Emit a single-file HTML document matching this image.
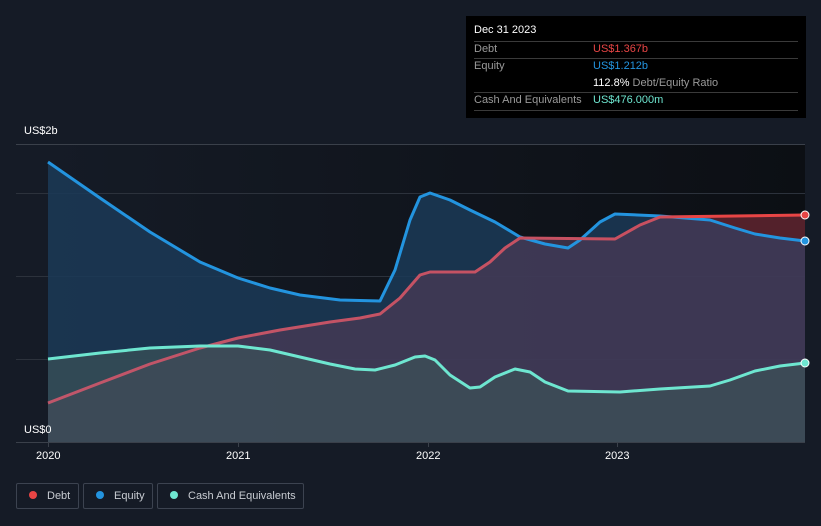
<!DOCTYPE html>
<html><head><style>
body{margin:0;width:821px;height:526px;background:#151b26;font-family:"Liberation Sans",sans-serif;overflow:hidden;position:relative}
.t{position:absolute;font-size:11px;color:#fff}
.tip{position:absolute;left:466px;top:16px;width:340px;height:102px;background:#000}
.tip div{position:absolute;font-size:11px}
.ln{position:absolute;left:8px;width:324px;height:1px;background:#3a3a3a}
.lg{position:absolute;top:483px;height:26px;border:1px solid #3c4350;border-radius:2px;box-sizing:border-box;font-size:11px;color:#c8ccd2;line-height:24px}
.lg i{display:inline-block;width:8px;height:8px;border-radius:50%;margin:0 10px 0 12px;vertical-align:-0px}
</style></head><body>
<svg width="821" height="526" style="position:absolute;left:0;top:0">
<defs><linearGradient id="bg" x1="0" x2="1"><stop offset="0" stop-color="#151b26"/><stop offset="1" stop-color="#0c0f14"/></linearGradient>
<linearGradient id="dl" x1="0" x2="1"><stop offset="0" stop-color="#c0566a"/><stop offset="0.8" stop-color="#c85060"/><stop offset="0.85" stop-color="#e84545"/></linearGradient></defs>
<rect x="48" y="144" width="757" height="298" fill="url(#bg)"/>
<g stroke="#2c323c" stroke-width="1"><line x1="16" y1="144.5" x2="805" y2="144.5" stroke="#3a404a"/><line x1="16" y1="193.5" x2="805" y2="193.5"/><line x1="16" y1="276.5" x2="805" y2="276.5"/><line x1="16" y1="359.5" x2="805" y2="359.5"/><line x1="16" y1="442.5" x2="805" y2="442.5" stroke="#3a404a"/></g>
<path d="M48,162 L100,198 L150,232 L200,262 L238,278 L270,288 L300,295 L340,300 L380,301 L395,270 L410,220 L420,197 L430,193 L450,200 L470,210 L495,222 L520,237 L545,244 L568,248 L580,240 L600,222 L615,214 L660,216 L710,220 L735,228 L755,234 L780,238 L805,241 L805,442 L48,442Z" fill="#1b3a57" fill-opacity="0.85"/>
<path d="M48,403 L100,383 L150,364 L200,348 L238,338 L280,330 L330,322 L360,318 L380,314 L400,298 L420,275 L430,272 L475,272 L490,262 L505,248 L520,238 L615,239 L640,225 L660,217 L805,215 L805,442 L48,442Z" fill="#4a3a55" fill-opacity="0.75"/>
<path d="M660,217 L805,215 L805,241 L755,234 L710,220Z" fill="#5a1e24" fill-opacity="0.8"/>
<path d="M48,359 L100,353 L150,348 L200,346 L238,346 L270,350 L300,357 L330,364 L355,369 L375,370 L395,365 L415,357 L425,356 L435,360 L450,375 L470,388 L480,387 L495,377 L515,369 L530,372 L545,382 L568,391 L620,392 L660,389 L710,386 L730,380 L755,371 L780,366 L805,363 L805,442 L48,442Z" fill="#3c5258" fill-opacity="0.7"/>
<path d="M48,162 L100,198 L150,232 L200,262 L238,278 L270,288 L300,295 L340,300 L380,301 L395,270 L410,220 L420,197 L430,193 L450,200 L470,210 L495,222 L520,237 L545,244 L568,248 L580,240 L600,222 L615,214 L660,216 L710,220 L735,228 L755,234 L780,238 L805,241" fill="none" stroke="#2394df" stroke-width="3" stroke-linejoin="round"/>
<path d="M48,403 L100,383 L150,364 L200,348 L238,338 L280,330 L330,322 L360,318 L380,314 L400,298 L420,275 L430,272 L475,272 L490,262 L505,248 L520,238 L615,239 L640,225 L660,217 L805,215" fill="none" stroke="url(#dl)" stroke-width="3" stroke-linejoin="round"/>
<path d="M48,359 L100,353 L150,348 L200,346 L238,346 L270,350 L300,357 L330,364 L355,369 L375,370 L395,365 L415,357 L425,356 L435,360 L450,375 L470,388 L480,387 L495,377 L515,369 L530,372 L545,382 L568,391 L620,392 L660,389 L710,386 L730,380 L755,371 L780,366 L805,363" fill="none" stroke="#6ee6d0" stroke-width="3" stroke-linejoin="round"/>
<circle cx="805" cy="215" r="4" fill="#e84545" stroke="#fff" stroke-width="1"/>
<circle cx="805" cy="241" r="4" fill="#2394df" stroke="#fff" stroke-width="1"/>
<circle cx="805" cy="363" r="4" fill="#6ee6d0" stroke="#fff" stroke-width="1"/>
<g stroke="#3a404a"><line x1="48.5" y1="442" x2="48.5" y2="447"/><line x1="238.5" y1="442" x2="238.5" y2="447"/><line x1="428.5" y1="442" x2="428.5" y2="447"/><line x1="617.5" y1="442" x2="617.5" y2="447"/></g>
</svg>
<div class="t" style="left:24px;top:125px">US$2b</div>
<div class="t" style="left:24px;top:424px">US$0</div>
<div class="t" style="left:36px;top:450px">2020</div>
<div class="t" style="left:226px;top:450px">2021</div>
<div class="t" style="left:416px;top:450px">2022</div>
<div class="t" style="left:605px;top:450px">2023</div>
<div class="tip">
<div style="left:8px;top:8px;color:#fff">Dec 31 2023</div>
<div class="ln" style="top:25px"></div>
<div style="left:8px;top:27px;color:#9a9a9a">Debt</div><div style="left:127px;top:27px;color:#e84545">US$1.367b</div>
<div class="ln" style="top:42px"></div>
<div style="left:8px;top:44px;color:#9a9a9a">Equity</div><div style="left:127px;top:44px;color:#2394df">US$1.212b</div>
<div style="left:127px;top:61px;color:#9a9a9a"><span style="color:#fff">112.8%</span> Debt/Equity Ratio</div>
<div class="ln" style="top:76px"></div>
<div style="left:8px;top:78px;color:#9a9a9a">Cash And Equivalents</div><div style="left:127px;top:78px;color:#6ee6d0">US$476.000m</div>
<div class="ln" style="top:94px"></div>
</div>
<div class="lg" style="left:16px;width:63px"><i style="background:#e84545"></i>Debt</div>
<div class="lg" style="left:83px;width:70px"><i style="background:#2394df"></i>Equity</div>
<div class="lg" style="left:157px;width:147px"><i style="background:#6ee6d0"></i>Cash And Equivalents</div>
</body></html>
